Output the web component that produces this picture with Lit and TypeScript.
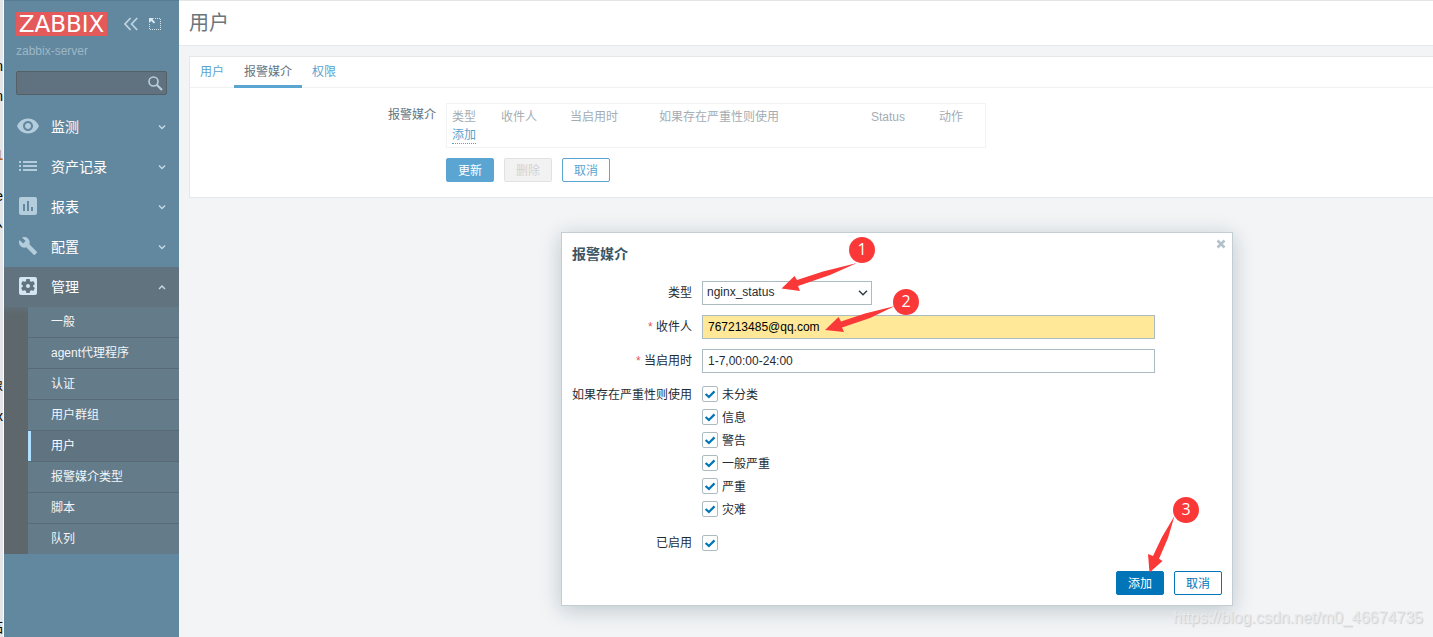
import { LitElement, html, css, svg } from "lit";
import { customElement, property } from "lit/decorators.js";
import { classMap } from "lit/directives/class-map.js";

const base = css`
  :host {
    box-sizing: border-box;
    font-family: "Liberation Sans", "Noto Sans CJK SC", sans-serif;
    font-size: 12px;
    line-height: 16px;
  }
  *,
  *::before,
  *::after {
    box-sizing: border-box;
  }
  a {
    text-decoration: none;
  }
  button,
  input,
  select {
    font: inherit;
    margin: 0;
  }
`;

const buttons = css`
  .btn {
    height: 24px;
    padding: 2px 11px 0;
    border: 1px solid #0275b8;
    border-radius: 2px;
    background: #0275b8;
    color: #fff;
    line-height: 20px;
  }
  .btn.alt {
    background: #fff;
    color: #0275b8;
  }
`;

const icons = {
  eye: svg`<path d="M12 4.5C7 4.5 2.73 7.61 1 12c1.73 4.39 6 7.5 11 7.5s9.27-3.11 11-7.5c-1.73-4.39-6-7.5-11-7.5zM12 17c-2.76 0-5-2.24-5-5s2.24-5 5-5 5 2.24 5 5-2.24 5-5 5zm0-8c-1.66 0-3 1.34-3 3s1.34 3 3 3 3-1.34 3-3-1.34-3-3-3z"/>`,
  list: svg`<path d="M3 13h2v-2H3v2zm0 4h2v-2H3v2zm0-8h2V7H3v2zm4 4h14v-2H7v2zm0 4h14v-2H7v2zM7 7v2h14V7H7z"/>`,
  chart: svg`<path d="M19 3H5c-1.1 0-2 .9-2 2v14c0 1.1.9 2 2 2h14c1.1 0 2-.9 2-2V5c0-1.1-.9-2-2-2zM9 17H7v-7h2v7zm4 0h-2V7h2v10zm4 0h-2v-4h2v4z"/>`,
  wrench: svg`<path transform="translate(2.2 2.2) scale(.82)" d="M22.7 19l-9.1-9.1c.9-2.3.4-5-1.5-6.9-2-2-5-2.4-7.4-1.3L9 6 6 9 1.6 4.7C.4 7.1.9 10.1 2.9 12.1c1.9 1.9 4.6 2.4 6.9 1.5l9.1 9.1c.4.4 1 .4 1.4 0l2.3-2.3c.5-.4.5-1.1.1-1.4z"/>`,
  gear: svg`<path d="M12 10c-1.1 0-2 .9-2 2s.9 2 2 2 2-.9 2-2-.9-2-2-2zm7-7H5c-1.11 0-2 .9-2 2v14c0 1.1.89 2 2 2h14c1.11 0 2-.9 2-2V5c0-1.1-.89-2-2-2zm-1.75 9c0 .23-.02.46-.05.68l1.48 1.16c.13.11.17.3.08.45l-1.4 2.42c-.09.15-.27.21-.43.15l-1.74-.7c-.36.28-.76.51-1.18.69l-.26 1.85c-.03.17-.18.3-.35.3h-2.8c-.17 0-.32-.13-.35-.29l-.26-1.85c-.43-.18-.82-.41-1.18-.69l-1.74.7c-.16.06-.34 0-.43-.15l-1.4-2.42c-.09-.15-.05-.34.08-.45l1.48-1.16c-.03-.23-.05-.46-.05-.69 0-.23.02-.46.05-.68l-1.48-1.16c-.13-.11-.17-.3-.08-.45l1.4-2.42c.09-.15.27-.21.43-.15l1.74.7c.36-.28.76-.51 1.18-.69l.26-1.85c.03-.17.18-.3.35-.3h2.8c.17 0 .32.13.35.29l.26 1.85c.43.18.82.41 1.18.69l1.74-.7c.16-.06.34 0 .43.15l1.4 2.42c.09.15.05.34-.08.45l-1.48 1.16c.03.23.05.46.05.69z"/>`,
};

type IconName = keyof typeof icons;

const menu: { icon: IconName; text: string; open?: boolean }[] = [
  { icon: "eye", text: "监测" },
  { icon: "list", text: "资产记录" },
  { icon: "chart", text: "报表" },
  { icon: "wrench", text: "配置" },
  { icon: "gear", text: "管理", open: true },
];

const submenu = ["一般", "agent代理程序", "认证", "用户群组", "用户", "报警媒介类型", "脚本", "队列"];

@customElement("side-bar")
class SideBar extends LitElement {
  @property() current = "";

  static styles = [
    base,
    css`
      :host {
        display: block;
        flex: none;
        width: 175px;
        background: #62889f;
        border-top: 1px solid #597c92;
      }
      .head {
        padding: 11px 12px 0;
      }
      .brand {
        display: flex;
        align-items: center;
      }
      .logo {
        width: 91px;
        height: 24px;
        background: #e45959;
        color: #fff;
        font: 23px/24px "DejaVu Sans", sans-serif;
        text-align: center;
      }
      .tool {
        width: 14px;
        height: 14px;
        padding: 0;
        border: 0;
        background: none;
        margin-left: 17px;
      }
      .tool + .tool {
        margin-left: 10px;
      }
      svg {
        display: block;
      }
      .server {
        margin-top: 7px;
        color: #9db7c7;
      }
      .search {
        display: flex;
        align-items: center;
        height: 24px;
        margin: 12px 0;
        padding-right: 3px;
        background: #60727f;
        border: 1px solid #545f66;
        border-radius: 2px;
      }
      .search input {
        flex: 1;
        min-width: 0;
        border: 0;
        background: none;
        color: #fff;
        outline: 0;
      }
      .search button {
        padding: 0;
        border: 0;
        background: none;
      }
      .item {
        display: flex;
        align-items: center;
        gap: 11px;
        height: 40px;
        padding: 0 12px;
        color: #fff;
        font-size: 14px;
      }
      .item.open {
        background: #61737f;
      }
      .glyph {
        width: 24px;
        height: 24px;
        margin-bottom: 2px;
        fill: #b3cddc;
      }
      .open .glyph {
        fill: #d5e6f0;
      }
      .text {
        flex: 1;
      }
      .arrow {
        width: 8px;
        height: 6px;
        margin-right: 1px;
        fill: none;
        stroke: #c3d7e2;
        stroke-width: 1.5;
      }
      .sub {
        margin: 0;
        padding: 0 0 0 24px;
        list-style: none;
        background: linear-gradient(#616f77, #5d676c 8px);
      }
      .sub li + li {
        border-top: 1px solid #586a75;
      }
      .sub a {
        display: block;
        height: 30px;
        padding-left: 20px;
        border-left: 3px solid #647b8a;
        background: #647b8a;
        color: #f2f6f8;
        line-height: 31px;
      }
      .sub .current {
        border-color: #afe0ff;
        background: #607380;
        color: #fff;
      }
    `,
  ];

  render() {
    return html`
      <div class="head">
        <div class="brand">
          <div class="logo">ZABBIX</div>
          <button class="tool" aria-label="collapse">
            <svg width="14" height="14" fill="none" stroke="#bdd3df" stroke-width="1.8">
              <path d="M6.6 1L1 7l5.600 6M13.200 1L7.600 7l5.600 6" />
            </svg>
          </button>
          <button class="tool" aria-label="hide">
            <svg width="14" height="14">
              <path
                d="M7 1.500h6M12.500 2v11M13 12.500H1M1.500 12V6"
                fill="none"
                stroke="#d5e4ec"
                stroke-width="1"
                stroke-dasharray="1 1"
              />
              <path d="M1 1h5L4.600 2.600l2.600 2.600-1.400 1.400L3.200 4 1 6z" fill="#dbe8ef" />
            </svg>
          </button>
        </div>
        <div class="server">zabbix-server</div>
        <form class="search">
          <input type="text" aria-label="search" />
          <button type="button" aria-label="search">
            <svg width="16" height="16" fill="none" stroke="#b9cedb">
              <circle cx="6.500" cy="6.500" r="4.500" stroke-width="1.600" />
              <path d="M10 10L15 15" stroke-width="2.200" />
            </svg>
          </button>
        </form>
      </div>
      <nav>
        ${menu.map(
          (m) => html`<a href="#" class=${classMap({ item: true, open: !!m.open })}>
            <svg class="glyph" viewBox="0 0 24 24">${icons[m.icon]}</svg>
            <span class="text">${m.text}</span>
            <svg class="arrow"><path d=${m.open ? "M1 5l3-3 3 3" : "M1 1.500l3 3 3-3"} /></svg>
          </a>`
        )}
        <ul class="sub">
          ${submenu.map(
            (t) => html`<li><a href="#" class=${classMap({ current: t === this.current })}>${t}</a></li>`
          )}
        </ul>
      </nav>
    `;
  }
}

@customElement("user-page")
class UserPage extends LitElement {
  static styles = [
    base,
    buttons,
    css`
      :host {
        display: block;
        flex: 1;
        min-width: 0;
        border-top: 1px solid #e3e6e8;
        color: #69747b;
      }
      header {
        height: 45px;
        padding: 0 10px;
        background: #fff;
        border-bottom: 1px solid #e6e9eb;
      }
      h1 {
        margin: 0;
        font-size: 20px;
        font-weight: 400;
        line-height: 44px;
        color: #6b757c;
      }
      .card {
        margin: 10px 0 0 10px;
        background: #fff;
        border: 1px solid #e5e8eb;
        border-right: 0;
      }
      .tabs {
        display: flex;
        height: 31px;
        border-bottom: 1px solid #eff1f2;
      }
      .tabs a {
        height: 31px;
        padding: 0 10px;
        line-height: 31px;
        color: #5ba3cf;
      }
      .tabs .on {
        border-bottom: 3px solid #5ba5d3;
        color: #69747b;
      }
      .form {
        display: grid;
        grid-template-columns: 246px minmax(0, 540px);
        gap: 10px;
        padding: 15px 0;
      }
      .label {
        text-align: right;
        line-height: 24px;
      }
      .frame {
        height: 45px;
        padding: 4px 0 0 5px;
        border: 1px solid #f0f2f3;
      }
      table {
        width: 100%;
        table-layout: fixed;
        border-collapse: collapse;
      }
      th,
      td {
        height: 17px;
        padding: 0;
        font-weight: 400;
        text-align: left;
        color: #a4adb3;
      }
      td {
        padding-top: 2px;
      }
      .c1 {
        width: 49px;
      }
      .c2 {
        width: 69px;
      }
      .c3 {
        width: 89px;
      }
      .c4 {
        width: 212px;
      }
      .c5 {
        width: 68px;
      }
      .add {
        display: inline-block;
        border-bottom: 1px dotted #5ba3cf;
        color: #5ba3cf;
        line-height: 15px;
      }
      .actions {
        grid-column: 2;
        display: flex;
        gap: 10px;
      }
      .btn {
        background: #5ba5d3;
        border-color: #5ba5d3;
      }
      .btn.alt {
        color: #5ba3cf;
      }
      .btn:disabled {
        background: #f2f2f2;
        border-color: #e0e3e4;
        color: #d0d3d4;
      }
    `,
  ];

  render() {
    return html`
      <header><h1>用户</h1></header>
      <section class="card">
        <nav class="tabs">
          <a href="#">用户</a>
          <a href="#" class="on">报警媒介</a>
          <a href="#">权限</a>
        </nav>
        <div class="form">
          <div class="label">报警媒介</div>
          <div class="frame">
            <table>
              <thead>
                <tr>
                  <th class="c1">类型</th>
                  <th class="c2">收件人</th>
                  <th class="c3">当启用时</th>
                  <th class="c4">如果存在严重性则使用</th>
                  <th class="c5">Status</th>
                  <th>动作</th>
                </tr>
              </thead>
              <tbody>
                <tr>
                  <td colspan="6"><a href="#" class="add">添加</a></td>
                </tr>
              </tbody>
            </table>
          </div>
          <div class="actions">
            <button class="btn">更新</button>
            <button class="btn" disabled>删除</button>
            <button class="btn alt">取消</button>
          </div>
        </div>
      </section>
    `;
  }
}

const severities = ["未分类", "信息", "警告", "一般严重", "严重", "灾难"];

const marks = [
  { n: 1, x: 862, y: 250, arrow: "857,263 823,271.500 797,280 794.500,276 781.500,288.500 800,291 798,286 830,275" },
  { n: 2, x: 906, y: 302, arrow: "895,306 865,313.500 841,321.500 838.500,317 825,330 844,332 842,327.500 870,318" },
  { n: 3, x: 1186, y: 510, arrow: "1174.500,516 1162,537 1153,556 1148,554 1149.500,572.500 1162.500,561 1159,558.700 1168,538" },
];

@customElement("media-dialog")
class MediaDialog extends LitElement {
  static styles = [
    base,
    buttons,
    css`
      :host {
        display: block;
        width: 672px;
        padding: 10px;
        background: #fff;
        border: 1px solid #c3ced4;
        box-shadow: 0 4px 20px rgba(0, 40, 60, 0.22);
        color: #1f2c33;
      }
      .head {
        display: flex;
        justify-content: space-between;
        align-items: flex-start;
        margin-bottom: 16px;
      }
      h2 {
        margin: 0;
        font-size: 14px;
        line-height: 22px;
        color: #3c5563;
      }
      .close {
        display: block;
        padding: 0;
        border: 0;
        background: none;
        margin: -4px -4px 0 0;
        width: 10px;
        height: 10px;
      }
      .close svg {
        display: block;
      }
      .form {
        display: grid;
        grid-template-columns: 120px minmax(0, 453px);
        gap: 10px;
        line-height: 24px;
      }
      .label {
        text-align: right;
        white-space: nowrap;
      }
      .req::before {
        content: "* ";
        color: #e45959;
      }
      .box {
        display: block;
        width: 100%;
        height: 24px;
        padding: 0 5px;
        border: 1px solid #acbbc2;
        border-radius: 0;
        background: #fff;
        color: #1f2c33;
        outline: 0;
      }
      select.box {
        appearance: none;
        width: 170px;
        padding: 0 4px 2px;
        line-height: 20px;
        background: #fff
          url("data:image/svg+xml,%3Csvg xmlns='http://www.w3.org/2000/svg' width='10' height='6'%3E%3Cpath d='M1 .8l4 4 4-4' fill='none' stroke='%23333f46' stroke-width='1.500'/%3E%3C/svg%3E")
          no-repeat right 3px center;
      }
      .filled {
        background: #ffe999;
        color: #000;
      }
      .checks {
        display: grid;
        gap: 1px;
        padding-bottom: 1px;
        justify-items: start;
      }
      .check {
        display: flex;
        align-items: center;
        gap: 4px;
        height: 22px;
      }
      .check span {
        padding-top: 2px;
      }
      .single {
        height: 24px;
      }
      input[type="checkbox"] {
        appearance: none;
        width: 16px;
        height: 16px;
        border: 1px solid #acbbc2;
        border-radius: 2px;
        background: #fff;
      }
      input[type="checkbox"]:checked {
        background-image: url("data:image/svg+xml,%3Csvg xmlns='http://www.w3.org/2000/svg' width='14' height='14'%3E%3Cpath d='M2.600 7l3.300 3 5.600-5.600' fill='none' stroke='%230275b8' stroke-width='2.200'/%3E%3C/svg%3E");
      }
      .foot {
        display: flex;
        justify-content: flex-end;
        gap: 10px;
        margin-top: 16px;
      }
      .marks {
        position: absolute;
        top: -1px;
        left: -1px;
        pointer-events: none;
        fill: #fb3838;
      }
      .marks text {
        fill: #fff;
        font: 16px "Open Sans", sans-serif;
        text-anchor: middle;
      }
    `,
  ];

  render() {
    return html`
      <div class="head">
        <h2>报警媒介</h2>
        <button class="close" aria-label="close">
          <svg width="10" height="10" stroke="#b3c1c9" stroke-width="2.600">
            <path d="M1.500 1.500l7 7M8.500 1.500l-7 7" />
          </svg>
        </button>
      </div>
      <div class="form">
        <label class="label" for="type">类型</label>
        <select class="box" id="type">
          <option>nginx_status</option>
        </select>
        <label class="label req" for="sendto">收件人</label>
        <input class="box filled" id="sendto" type="text" .value=${"767213485@qq.com"} />
        <label class="label req" for="period">当启用时</label>
        <input class="box" id="period" type="text" .value=${"1-7,00:00-24:00"} />
        <div class="label">如果存在严重性则使用</div>
        <div class="checks">
          ${severities.map(
            (s) => html`<label class="check"><input type="checkbox" checked /><span>${s}</span></label>`
          )}
        </div>
        <label class="label" for="enabled">已启用</label>
        <div class="check single"><input type="checkbox" id="enabled" checked /></div>
      </div>
      <div class="foot">
        <button class="btn">添加</button>
        <button class="btn alt">取消</button>
      </div>
      <svg class="marks" width="672" height="374" viewBox="561 232 672 374">
        ${marks.map(
          (m) => svg`<polygon points=${m.arrow} /><circle cx=${m.x} cy=${m.y} r="13" />
            <text x=${m.x} y=${m.y + 5}>${m.n}</text>`
        )}
      </svg>
    `;
  }
}

@customElement("app-root")
class AppRoot extends LitElement {
  static styles = [
    base,
    css`
      :host {
        position: relative;
        display: flex;
        height: 100vh;
        min-height: 620px;
        overflow: hidden;
        background: #f2f4f6;
      }
      .behind {
        flex: none;
        display: grid;
        grid-template-rows: 51px 30px 59px 41px 26px 163px 31px 211px;
        align-items: end;
        justify-items: end;
        justify-content: end;
        width: 4px;
        padding-top: 23px;
        overflow: hidden;
        background: #e4e5e8;
        border-right: 1px solid #fdfdfd;
        color: #000;
        font-size: 14px;
      }
      .behind .hot {
        color: #b96a0c;
        font-weight: 700;
      }
      media-dialog {
        position: absolute;
        top: 232px;
        right: 200px;
      }
      .stamp {
        position: absolute;
        right: 10px;
        bottom: 10px;
        font-size: 16px;
        line-height: 18px;
        color: #e9eaec;
        text-shadow: 1px 1px 1px #c9cccf;
      }
    `,
  ];

  render() {
    return html`
      <div class="behind" aria-hidden="true">
        <span>n</span><span>n</span><span class="hot">1</span><span>e</span><span>么</span><span>像</span
        ><span>x</span><span>临</span>
      </div>
      <side-bar current="用户"></side-bar>
      <user-page></user-page>
      <media-dialog></media-dialog>
      <div class="stamp">https://blog.csdn.net/m0_46674735</div>
    `;
  }
}
